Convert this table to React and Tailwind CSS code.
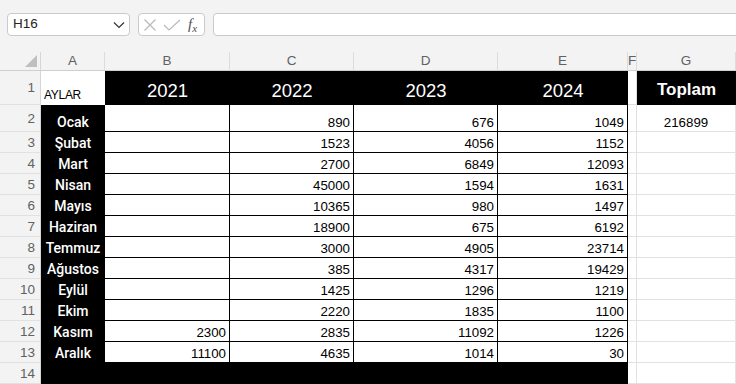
import React from "react";

const months = ["Ocak","Şubat","Mart","Nisan","Mayıs","Haziran","Temmuz","Ağustos","Eylül","Ekim","Kasım","Aralık"];
const B = ["","","","","","","","","","","2300","11100"];
const C = ["890","1523","2700","45000","10365","18900","3000","385","1425","2220","2835","4635"];
const D = ["676","4056","6849","1594","980","675","4905","4317","1296","1835","11092","1014"];
const E = ["1049","1152","12093","1631","1497","6192","23714","19429","1219","1100","1226","30"];

function RowHead({ n }) {
  return (
    <div className="flex items-center justify-end pr-[5px] pt-[2px] bg-[#f3f3f3] border-r border-b border-r-[#d6d6d6] border-b-[#e1e1e1] text-[13.5px] text-[#616161]">
      {n}
    </div>
  );
}

function ColHead({ l }) {
  return (
    <div className="flex items-center justify-center bg-[#f3f3f3] border-r border-b border-r-[#dcdcdc] border-b-[#cfcfcf] text-[13.5px] text-[#616161]">
      {l}
    </div>
  );
}

function DataCell({ v }) {
  return (
    <div className="flex items-end justify-end pr-[3px] bg-white border-r border-b border-black text-[13.3px] leading-[17px] text-black">
      {v}
    </div>
  );
}

function GreyCell({ children }) {
  return (
    <div className="flex items-end justify-center bg-white border-r border-b border-[#e1e1e1] text-[13.3px] leading-[17px] text-black">
      {children}
    </div>
  );
}

function Month({ m }) {
  return (
    <div className="flex items-end justify-center pb-[1px] bg-black text-white font-medium font-['Roboto',sans-serif] text-[14px] leading-[17px]">
      {m}
    </div>
  );
}

function Year({ y }) {
  return (
    <div className="flex items-center justify-center pt-[5px] bg-black text-white text-[18.5px]">
      {y}
    </div>
  );
}

export default function App() {
  return (
    <div className="w-[736px] h-[384px] overflow-hidden bg-[#f3f3f3] font-['Liberation_Sans',Arial,sans-serif]">
      {/* formula bar */}
      <div className="h-[52px] flex items-start pt-[13px]">
        <div className="shrink-0 ml-[7px] w-[123px] h-[23px] flex items-center justify-between pl-[5px] pr-[3px] bg-white border border-[#cacaca] rounded-[4px]">
          <span className="text-[13.5px] text-[#242424]">H16</span>
          <svg width="12" height="8" viewBox="0 0 12 8" className="mr-[1px]">
            <path d="M1 1.5 L6 6.5 L11 1.5" fill="none" stroke="#333" strokeWidth="1.2" />
          </svg>
        </div>
        <div className="shrink-0 ml-[8px] w-[67px] h-[23px] flex items-center bg-white border border-[#cacaca] rounded-[4px]">
          <svg width="14" height="14" viewBox="0 0 14 14" className="ml-[4px]">
            <path d="M1.5 1.5 L12.5 12.5 M12.5 1.5 L1.5 12.5" fill="none" stroke="#b9b9b9" strokeWidth="1.2" />
          </svg>
          <svg width="18" height="12" viewBox="0 0 18 12" className="ml-[6px]">
            <path d="M1 6 L6 11 L17 1" fill="none" stroke="#b9b9b9" strokeWidth="1.2" />
          </svg>
          <span className="ml-[7px] text-[#505050] italic font-['Liberation_Serif',serif] text-[15px] leading-none">
            f<span className="text-[11px] relative top-[3px]">x</span>
          </span>
        </div>
        <div className="shrink-0 ml-[8px] w-[560px] h-[23px] bg-white border border-[#cacaca] rounded-[4px]" />
      </div>

      {/* sheet */}
      <div className="grid grid-cols-[41px_64px_125px_124px_144px_130px_9px_99px] grid-rows-[19px_34px_27px_repeat(12,21px)]">
        <div className="relative bg-[#f3f3f3] border-r border-b border-r-[#d6d6d6] border-b-[#cfcfcf]">
          <svg width="12" height="12" viewBox="0 0 12 12" className="absolute left-[25px] top-[3px]">
            <path d="M12 0 L12 12 L0 12 Z" fill="#bfbfbf" />
          </svg>
        </div>
        {["A","B","C","D","E","F","G"].map((l) => <ColHead key={l} l={l} />)}

        <RowHead n="1" />
        <div className="flex items-end pl-[3px] bg-white text-[12px] tracking-[-0.3px] leading-[17px] text-black pb-[1px]">AYLAR</div>
        <Year y="2021" />
        <Year y="2022" />
        <Year y="2023" />
        <Year y="2024" />
        <GreyCell />
        <div className="flex items-center justify-center pt-[4px] bg-black text-white font-bold text-[17px]">Toplam</div>

        {months.map((m, i) => (
          <React.Fragment key={m}>
            <RowHead n={String(i + 2)} />
            <Month m={m} />
            <DataCell v={B[i]} />
            <DataCell v={C[i]} />
            <DataCell v={D[i]} />
            <DataCell v={E[i]} />
            <GreyCell />
            <GreyCell>{i === 0 ? "216899" : ""}</GreyCell>
          </React.Fragment>
        ))}

        <RowHead n="14" />
        <div className="bg-black" />
        <div className="bg-black" />
        <div className="bg-black" />
        <div className="bg-black" />
        <div className="bg-black" />
        <GreyCell />
        <GreyCell />
      </div>
    </div>
  );
}
